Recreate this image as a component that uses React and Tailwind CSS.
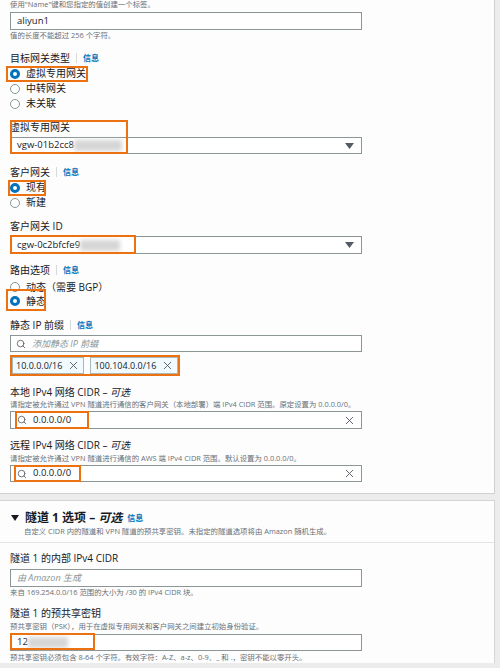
import React from 'react';
import { Search, X } from 'lucide-react';

const Info = () => (
    <>
        <span className="mx-[6px] h-[10px] w-px bg-[#d5dbdb]" />
        <span className="text-[8px] font-bold text-[#0073bb]">信息</span>
    </>
);

const Label = ({ children, info, className = '' }) => (
    <div className={`flex h-[12px] items-center text-[10px] text-[#16191f] ${className}`}>
        <span>{children}</span>
        {info && <Info />}
    </div>
);

const Hint = ({ children, className = '' }) => (
    <div className={`flex h-[10px] items-center whitespace-nowrap text-[7.4px] text-[#687078] ${className}`}>{children}</div>
);

const Radio = ({ checked, label, className = '' }) => (
    <div className={`flex items-center gap-[6px] text-[10px] text-[#16191f] ${className}`}>
        {checked
            ? <span className="h-[10px] w-[10px] rounded-full border-[3px] border-[#0073bb] bg-white" />
            : <span className="h-[10px] w-[10px] rounded-full border border-[#879596] bg-white" />}
        <span>{label}</span>
    </div>
);

const Caret = () => (
    <svg width="9" height="6" viewBox="0 0 9 6" className="absolute right-[7px] top-1/2 -translate-y-1/2">
        <path d="M0 0h9L4.5 6z" fill="#545b64" />
    </svg>
);

const Blur = ({ className = '' }) => <span className={`inline-block h-[11px] bg-[#d6d6d6] blur-[2px] ${className}`} />;

const Mark = ({ className }) => <span className={`pointer-events-none absolute z-10 border-2 border-[#ec7211] ${className}`} />;

const Token = ({ text }) => (
    <div className="flex h-[17px] items-center gap-[5px] border border-[#aab7b8] bg-[#f1faff] pl-[3px] pr-[3px] text-[9px] text-[#16191f]">
        <span>{text}</span>
        <X size={13} strokeWidth={1.7} className="text-[#545b64]" />
    </div>
);

const App = () => {
    return (
        <div className="h-[668px] w-[500px] overflow-hidden bg-[#ececec] font-['Open_Sans','Noto_Sans_CJK_SC',sans-serif]">
            {/* main card */}
            <div className="w-[495px] border-b border-r border-[#d0d0d0] bg-[#fdfdfd] pb-[11px] pl-[10px]">
                <Hint className="text-[#545b64]">使用"Name"键和您指定的值创建一个标签。</Hint>
                <div className="mt-[2px] flex h-[18px] w-[352px] items-center border border-[#8d9696] bg-white px-[6px] text-[9.5px] text-[#16191f]">aliyun1</div>
                <Hint className="mt-[1px]">值的长度不能超过 256 个字符。</Hint>

                <Label info className="mt-[11px]">目标网关类型</Label>
                <div className="relative mt-[2px]">
                    <Mark className="-left-[4px] top-0 h-[16px] w-[82px]" />
                    <Radio checked label="虚拟专用网关" className="h-[15px]" />
                    <Radio label="中转网关" className="h-[15px]" />
                    <Radio label="未关联" className="h-[15px]" />
                </div>

                <div className="relative mt-[10px]">
                    <Mark className="-top-[1px] left-0 h-[34px] w-[118px]" />
                    <Label>虚拟专用网关</Label>
                    <div className="relative mt-[4px] flex h-[17px] w-[352px] items-center border border-[#8d9696] bg-white pl-[6px] text-[9.5px] text-[#16191f]">
                        <span>vgw-01b2cc8</span>
                        <Blur className="w-[48px]" />
                        <Caret />
                    </div>
                </div>

                <Label info className="mt-[12px]">客户网关</Label>
                <div className="relative mt-[2px]">
                    <Mark className="-left-[2px] top-0 h-[16px] w-[38px]" />
                    <Radio checked label="现有" className="h-[15px]" />
                    <Radio label="新建" className="h-[15px]" />
                </div>

                <Label className="mt-[10px]">客户网关 ID</Label>
                <div className="relative mt-[4px] flex h-[18px] w-[352px] items-center border border-[#8d9696] bg-white pl-[6px] text-[9.5px] text-[#16191f]">
                    <Mark className="-left-px -top-[2px] h-[19px] w-[126px]" />
                    <span>cgw-0c2bfcfe9</span>
                    <Blur className="w-[40px]" />
                    <Caret />
                </div>

                <Label info className="mt-[10px]">路由选项</Label>
                <div className="relative mt-[4px]">
                    <Radio label="动态（需要 BGP）" className="h-[14px]" />
                    <Radio checked label="静态" className="h-[14px]" />
                    <Mark className="-left-[4px] top-[9px] h-[22px] w-[40px]" />
                </div>

                <Label info className="mt-[11px]">静态 IP 前缀</Label>
                <div className="mt-[4px] flex h-[17px] w-[352px] items-center gap-[6px] border border-[#8d9696] bg-white pl-[5px] text-[9px] italic text-[#879596]">
                    <Search size={10} strokeWidth={2} className="text-[#545b64]" />
                    <span>添加静态 IP 前缀</span>
                </div>
                <div className="relative mt-[5px] flex w-fit gap-[6px] pl-[2px]">
                    <Mark className="-left-0 -top-[2px] h-[21px] w-[170px]" />
                    <Token text="10.0.0.0/16" />
                    <Token text="100.104.0.0/16" />
                </div>

                <Label className="mt-[12px]">本地 IPv4 网络 CIDR – <i>可选</i></Label>
                <Hint className="mt-[2px]">请指定被允许通过 VPN 隧道进行通信的客户网关（本地部署）端 IPv4 CIDR 范围。原定设置为 0.0.0.0/0。</Hint>
                <div className="relative mt-[1px] flex h-[18px] w-[352px] items-center gap-[6px] border border-[#8d9696] bg-white pl-[6px] text-[9.5px] text-[#16191f]">
                    <Mark className="left-[4px] -top-px h-[18px] w-[74px]" />
                    <Search size={10} strokeWidth={2} className="text-[#545b64]" />
                    <span>0.0.0.0/0</span>
                    <X size={13} strokeWidth={1.7} className="absolute right-[5px] text-[#545b64]" />
                </div>

                <Label className="mt-[10px]">远程 IPv4 网络 CIDR – <i>可选</i></Label>
                <Hint className="mt-[3px]">请指定被允许通过 VPN 隧道进行通信的 AWS 端 IPv4 CIDR 范围。默认设置为 0.0.0.0/0。</Hint>
                <div className="relative mt-[1px] flex h-[17px] w-[352px] items-center gap-[6px] border border-[#8d9696] bg-white pl-[6px] text-[9.5px] text-[#16191f]">
                    <Mark className="left-[3px] -top-px h-[17px] w-[67px]" />
                    <Search size={10} strokeWidth={2} className="text-[#545b64]" />
                    <span>0.0.0.0/0</span>
                    <X size={13} strokeWidth={1.7} className="absolute right-[5px] text-[#545b64]" />
                </div>
            </div>

            {/* tunnel 1 card */}
            <div className="mt-[6px] w-[495px] border-r border-t border-[#d5d5d5] bg-[#fdfdfd]">
                <div className="border-b border-[#e4e4e4] pb-[5px] pl-[10px] pt-[9px]">
                    <div className="flex h-[16px] items-center text-[#16191f]">
                        <svg width="8" height="6" viewBox="0 0 8 6" className="mr-[6px] ml-[1px]"><path d="M0 0h8L4 6z" fill="#16191f" /></svg>
                        <span className="text-[12px] font-bold">隧道 1 选项 – <i>可选</i></span>
                        <span className="ml-[5px] text-[8px] font-bold text-[#0073bb]">信息</span>
                    </div>
                    <Hint className="ml-[14px] mt-[1px]">自定义 CIDR 内的隧道和 VPN 隧道的预共享密钥。未指定的隧道选项将由 Amazon 随机生成。</Hint>
                </div>
                <div className="pl-[10px]">
                    <Label className="mt-[9px]">隧道 1 的内部 IPv4 CIDR</Label>
                    <div className="mt-[5px] flex h-[18px] w-[352px] items-center border border-[#8d9696] bg-white pl-[6px] text-[9px] italic text-[#879596]">由 Amazon 生成</div>
                    <Hint className="mt-[1px]">来自 169.254.0.0/16 范围的大小为 /30 的 IPv4 CIDR 块。</Hint>

                    <Label className="mt-[9px]">隧道 1 的预共享密钥</Label>
                    <Hint className="mt-[3px]">预共享密钥（PSK），用于在虚拟专用网关和客户网关之间建立初始身份验证。</Hint>
                    <div className="relative mt-[2px] flex h-[17px] w-[352px] items-center border border-[#8d9696] bg-white pl-[6px] text-[9.5px] text-[#16191f]">
                        <Mark className="-left-px -top-[2px] h-[17px] w-[85px]" />
                        <span>12</span>
                        <Blur className="w-[40px]" />
                    </div>
                    <Hint className="mt-[2px]">预共享密钥必须包含 8-64 个字符。有效字符：A-Z、a-z、0-9、_ 和 .，密钥不能以零开头。</Hint>
                </div>
            </div>
        </div>
    );
};

export default App;
